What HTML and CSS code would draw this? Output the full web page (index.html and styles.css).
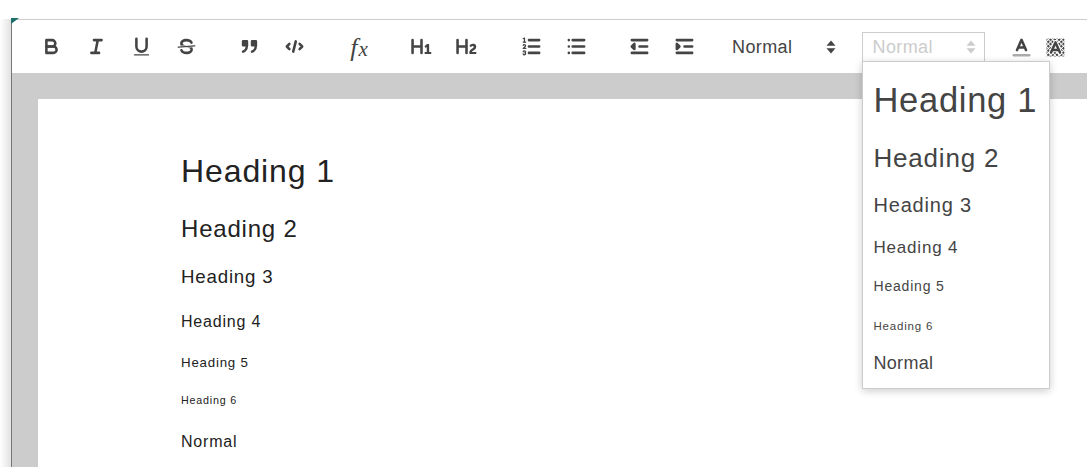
FILE: index.html
```html
<!DOCTYPE html>
<html lang="en">
<head>
<meta charset="utf-8">
<title>Editor</title>
<link rel="stylesheet" href="styles.css">
</head>
<body>
<div class="side"></div>
<div class="corner"></div>
<main class="editor">
  <div class="toolbar">
    <div class="group g-format">
      <span class="btn"><svg viewBox="0 0 18 18"><path d="M5,4H9.5A2.5,2.5,0,0,1,12,6.500v0A2.5,2.5,0,0,1,9.500,9H5V4Z"/><path d="M5,9h5.500A2.500,2.500,0,0,1,13,11.500v0A2.500,2.500,0,0,1,10.500,14H5V9Z"/></svg></span>
      <span class="btn"><svg viewBox="0 0 18 18"><path d="M7 4h6M5 14h6M8 14l2-10"/></svg></span>
      <span class="btn"><svg viewBox="0 0 18 18"><path d="M5,3V9a4.012,4.012,0,0,0,4,4H9a4.012,4.012,0,0,0,4-4V3"/><rect class="f" height="1" rx=".5" ry=".5" width="12" x="3" y="15"/></svg></span>
      <span class="btn"><svg viewBox="0 0 18 18"><path class="thin" d="M15.500 8.500L2.500 9.500"/><path class="f" d="M9.007,8C6.542,7.791,6,7.519,6,6.500,6,5.792,7.283,5,9,5c1.571,0,2.765.679,2.969,1.309a1,1,0,0,0,1.900-.617C13.356,4.106,11.354,3,9,3,6.200,3,4,4.538,4,6.500a3.200,3.200,0,0,0,.5,1.843Z"/><path class="f" d="M8.984,10C11.457,10.208,12,10.479,12,11.500c0,.708-1.283,1.500-3,1.500-1.571,0-2.765-.679-2.969-1.309a1,1,0,1,0-1.900.617C4.644,13.894,6.646,15,9,15c2.800,0,5-1.538,5-3.500a3.200,3.200,0,0,0-.5-1.843Z"/></svg></span>
    </div>
    <div class="group g-block">
      <span class="btn"><svg viewBox="0 0 18 18"><rect class="fs" height="3" width="3" x="4" y="5"/><rect class="fs" height="3" width="3" x="11" y="5"/><path d="M7,8c0,4.031-3,5-3,5"/><path d="M14,8c0,4.031-3,5-3,5"/></svg></span>
      <span class="btn"><svg viewBox="0 0 18 18"><path d="M5 7L3 9l2 2M13 7l2 2-2 2M10 5L8 13"/></svg></span>
    </div>
    <div class="group g-formula">
      <span class="btn fx"><i>f</i><i class="x">x</i></span>
    </div>
    <div class="group g-head">
      <span class="btn"><svg viewBox="0 0 18 18"><path class="f" d="M10,4V14a1,1,0,0,1-2,0V10H3v4a1,1,0,0,1-2,0V4A1,1,0,0,1,3,4V8H8V4a1,1,0,0,1,2,0Zm6.068,9.209H14.990V7.599a.541.541,0,0,0-.605-.605h-.627a1.011,1.011,0,0,0-.748.297L11.645,8.566a.544.544,0,0,0-.022.858l.286.308a.539.539,0,0,0,.847.033l.099-.088a1.214,1.214,0,0,0,.242-.353h.022s-.011.309-.011.605V13.209H12.041a.541.541,0,0,0-.605.605v.439a.541.541,0,0,0,.605.605h4.027a.541.541,0,0,0,.605-.605v-.439A.541.541,0,0,0,16.068,13.209Z"/></svg></span>
      <span class="btn"><svg viewBox="0 0 18 18"><path class="f" d="M16.740,13.814v.439a.541.541,0,0,1-.605.605H11.855a.584.584,0,0,1-.649-.605V14.013c0-2.905,3.399-3.422,3.399-4.555a.777.777,0,0,0-.847-.781,1.177,1.177,0,0,0-.836.385c-.275.264-.561.374-.858.132l-.429-.341c-.308-.242-.385-.518-.154-.814a2.972,2.972,0,0,1,2.454-1.177,2.454,2.454,0,0,1,2.684,2.409c0,2.453-3.179,2.927-3.278,3.938h2.794A.541.541,0,0,1,16.740,13.814ZM9,3A1,1,0,0,0,8,4V8H3V4A1,1,0,0,0,1,4V14a1,1,0,0,0,2,0V10H8v4a1,1,0,0,0,2,0V4A1,1,0,0,0,9,3Z"/></svg></span>
    </div>
    <div class="group g-list">
      <span class="btn"><svg viewBox="0 0 18 18"><path d="M7 4h8M7 9h8M7 14h8"/><path class="thin" d="M2.500 5.500h2"/><path class="f" d="M3.500,6A.5,.5,0,0,1,3,5.500V3.085l-.276.138A.5,.5,0,0,1,2.053,3c-.124-.247-.023-.324.224-.447l1-.5A.5,.5,0,0,1,4,2.500v3A.5,.5,0,0,1,3.500,6Z"/><path class="thin" d="M4.500,10.500h-2c0-.234,1.850-1.076,1.850-2.234A.959,.959,0,0,0,2.500,8.156"/><path class="thin" d="M2.500,14.846a.959,.959,0,0,0,1.850-.109A.7,.7,0,0,0,3.750,14a.688,.688,0,0,0,.6-.736,.959,.959,0,0,0-1.850-.109"/></svg></span>
      <span class="btn"><svg viewBox="0 0 18 18"><path d="M6 4h9M6 9h9M6 14h9M3 4h0M3 9h0M3 14h0"/></svg></span>
    </div>
    <div class="group g-indent">
      <span class="btn"><svg viewBox="0 0 18 18"><path d="M3 14h12M3 4h12M9 9h6"/><path class="fs" d="M5 7v4L3 9z"/></svg></span>
      <span class="btn"><svg viewBox="0 0 18 18"><path d="M3 14h12M3 4h12M9 9h6"/><path class="fs" d="M3 7v4l2-2z"/></svg></span>
    </div>
    <div class="pick">
      <span>Normal</span>
      <svg class="updown" viewBox="0 0 10 14"><path d="M5 .5l4.500 5.200h-9zM5 13.500L.5 8.300h9z"/></svg>
    </div>
    <div class="select">
      <span>Normal</span>
      <svg class="updown light" viewBox="0 0 10 14"><path d="M5 .5l4.500 5.200h-9zM5 13.500L.5 8.300h9z"/></svg>
    </div>
    <span class="btn b-color"><svg viewBox="0 0 18 18"><path class="bar" d="M3 15h12"/><path d="M5.500 11L9 3l3.500 8M11.630 9H6.380"/></svg></span>
    <span class="btn b-bg"><svg viewBox="0 0 18 18">
      <defs><pattern id="hatch" width="2.400" height="2.400" patternUnits="userSpaceOnUse" patternTransform="rotate(45)"><rect class="f" width="1.700" height="1.700"/></pattern></defs>
      <rect class="hatched" x="2" y="2" width="14" height="14"/>
      <path class="halo" d="M5.500 13L9 5l3.500 8M11.630 11H6.380"/>
      <path d="M5.500 13L9 5l3.500 8M11.630 11H6.380"/>
    </svg></span>
  </div>
  <div class="stage">
    <article class="page">
      <h1>Heading 1</h1>
      <h2>Heading 2</h2>
      <h3>Heading 3</h3>
      <h4>Heading 4</h4>
      <h5>Heading 5</h5>
      <h6>Heading 6</h6>
      <p>Normal</p>
    </article>
  </div>
</main>
<ul class="menu">
  <li class="m1">Heading 1</li>
  <li class="m2">Heading 2</li>
  <li class="m3">Heading 3</li>
  <li class="m4">Heading 4</li>
  <li class="m5">Heading 5</li>
  <li class="m6">Heading 6</li>
  <li class="m7">Normal</li>
</ul>
</body>
</html>
```
FILE: styles.css
```css
* { box-sizing: border-box; }
html, body { margin: 0; height: 467px; overflow: hidden; }
body {
  background: #fff;
  font-family: "Liberation Sans", Arial, sans-serif;
  position: relative;
  padding: 19px 0 0 11px;
}
.side {
  position: absolute;
  left: 0;
  top: 19px;
  bottom: 0;
  width: 11px;
  background: linear-gradient(to right, #fff, #e2e2e2);
}
.corner {
  position: absolute;
  left: 11px;
  top: 18px;
  width: 0;
  height: 0;
  border-top: 6px solid #1f6f6d;
  border-right: 8px solid transparent;
}
.editor {
  height: 448px;
  border-left: 1px solid #777;
  border-top: 1px solid #ccc;
  display: flex;
  flex-direction: column;
}
.toolbar {
  height: 53px;
  flex: none;
  display: flex;
  align-items: center;
  background: #fff;
}
.group { display: flex; }
.btn {
  width: 45px;
  height: 30px;
  flex: none;
  display: flex;
  align-items: center;
  justify-content: center;
}
.btn svg {
  width: 23px;
  height: 23px;
  fill: none;
  stroke: #444;
  stroke-width: 2;
  stroke-linecap: round;
  stroke-linejoin: round;
  display: block;
}
.btn svg .f { fill: #444; stroke: none; }
.btn svg .fs { fill: #444; }
.btn svg .thin { stroke-width: 1; }
.btn svg .bar { stroke: #aaa; }
.btn svg .hatched { fill: url(#hatch); stroke: none; }
.btn svg .halo { stroke: #fff; stroke-width: 3.500; }
.g-format { margin-left: 17px; }
.g-block { margin-left: 17.500px; }
.g-formula { margin-left: 20px; }
.g-head { margin-left: 17.500px; }
.g-list { margin-left: 19.500px; }
.g-indent { margin-left: 18px; }
.fx { font: italic 26px "Liberation Serif", serif; color: #444; align-items: baseline; padding-top: 1px; }
.fx i { display: block; line-height: 30px; }
.fx .x { font-size: 21px; margin-left: 1px; }
.pick {
  margin-left: 25.500px;
  width: 103.500px;
  display: flex;
  align-items: center;
  justify-content: space-between;
  font-size: 18px;
  letter-spacing: .4px;
  color: #444;
}
.pick span, .select span { line-height: 30px; height: 30px; }
.updown { width: 10px; height: 14px; fill: #444; display: block; flex: none; }
.updown.light { fill: #ccc; }
.select {
  margin-left: 26px;
  width: 123px;
  height: 30px;
  flex: none;
  border: 1px solid #ccc;
  padding: 0 8px 0 10px;
  display: flex;
  justify-content: space-between;
  align-items: center;
  color: #ccc;
  font-size: 18px;
  letter-spacing: .4px;
}
.b-color { margin-left: 14px; }
.b-color svg, .b-bg svg { margin-top: 2px; }
.b-bg { margin-left: -11px; }
.stage {
  flex: 1;
  min-height: 0;
  background: #ccc;
  padding: 26px 0 0 26px;
}
.page {
  background: #fff;
  height: 100%;
  padding: 47.500px 0 0 143px;
  color: #222;
  letter-spacing: .8px;
}
.page h1, .page h2, .page h3, .page h4, .page h5, .page h6, .page p { margin: 0; font-weight: 400; }
.page h1 { font-size: 32px; line-height: 48px; letter-spacing: .9px; }
.page h2 { font-size: 24px; line-height: 36px; margin-top: 16.500px; }
.page h3 { font-size: 18.720px; line-height: 28px; margin-top: 16px; }
.page h4 { font-size: 16px; line-height: 24px; margin-top: 19px; }
.page h5 { font-size: 13.280px; line-height: 20px; margin-top: 19px; }
.page h6 { font-size: 10.720px; line-height: 16px; margin-top: 19px; }
.page p { font-size: 16px; line-height: 24px; margin-top: 22px; }
.menu {
  position: absolute;
  left: 862px;
  top: 61px;
  width: 188px;
  height: 328px;
  margin: 0;
  padding: 15px 10.500px 0;
  list-style: none;
  background: #fff;
  border: 1px solid #ccc;
  box-shadow: 0 2px 8px rgba(0,0,0,.2);
  color: #444;
  letter-spacing: .8px;
}
.menu li { white-space: nowrap; }
.m1 { font-size: 34.500px; line-height: 47px; letter-spacing: .7px; }
.m2 { font-size: 26px; line-height: 36px; margin-top: 16px; }
.m3 { font-size: 20px; line-height: 28px; margin-top: 15px; }
.m4 { font-size: 17px; line-height: 24px; margin-top: 17px; }
.m5 { font-size: 14px; line-height: 20px; margin-top: 16px; }
.m6 { font-size: 11.500px; line-height: 16px; margin-top: 22px; }
.m7 { font-size: 18px; line-height: 24px; margin-top: 17px; letter-spacing: .3px; }
```
